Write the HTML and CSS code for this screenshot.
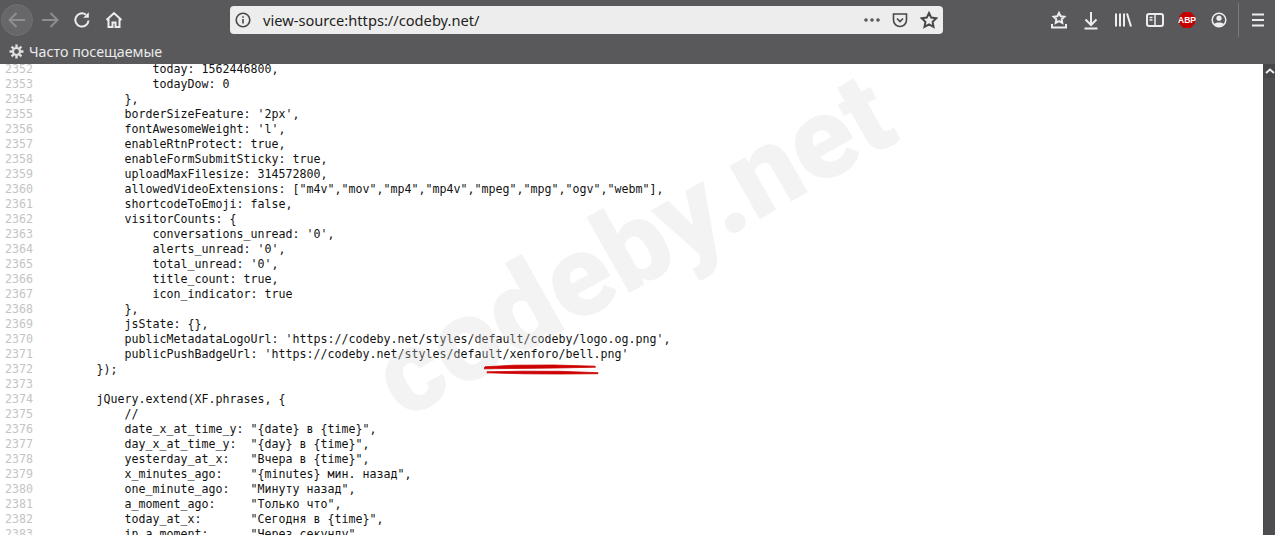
FILE: index.html
```html
<!DOCTYPE html>
<html lang="ru">
<head>
<meta charset="utf-8">
<title>view-source:https://codeby.net/</title>
<link rel="stylesheet" href="styles.css">
</head>
<body>
<header class="chrome">
  <div class="toolbar">
    <button class="btn back"><span class="back-circle"><svg width="20" height="18" viewBox="0 0 20 18"><path d="M18 9H2.500M9.500 2L2.500 9l7 7" class="ic dim"/></svg></span></button>
    <button class="btn"><svg width="20" height="18" viewBox="0 0 20 18"><path d="M2 9h15.500M10.500 2l7 7-7 7" class="ic dim"/></svg></button>
    <button class="btn"><svg width="18" height="18" viewBox="0 0 18 18"><path d="M15.500 9.500A6.600 6.600 0 1 1 13 3.800" class="ic"/><path d="M15.800 1.200v5.600h-5.600z" class="fill"/></svg></button>
    <button class="btn"><svg width="18" height="18" viewBox="0 0 18 18"><path d="M1.500 9L9 2l7.500 7M3.500 8v8h4v-4.500h3V16h4V8" class="ic"/></svg></button>
    <div class="urlbar">
      <svg class="info" width="16" height="16" viewBox="0 0 16 16"><circle cx="8" cy="8" r="6.800" class="dk"/><path d="M8 7v4.500M8 4.200v1.600" class="dk"/></svg>
      <span class="url">view-source:https://codeby.net/</span>
      <svg class="dots" width="18" height="6" viewBox="0 0 18 6"><circle cx="3" cy="3" r="1.800"/><circle cx="9" cy="3" r="1.800"/><circle cx="15" cy="3" r="1.800"/></svg>
      <svg class="pocket" width="16" height="16" viewBox="0 0 16 16"><path d="M1.500 2h13v6a6.500 6.500 0 0 1-13 0z" class="dk"/><path d="M5 6.500L8 9.500l3-3" class="dk"/></svg>
      <svg class="star" width="18" height="18" viewBox="0 0 18 18"><path d="M9 2l2.200 4.600 5 .7-3.600 3.500.9 5L9 13.400 4.500 15.800l.9-5L1.800 7.300l5-.7z" class="dk bold"/></svg>
    </div>
    <div class="tools">
      <button class="btn"><svg width="18" height="20" viewBox="0 0 18 20"><path d="M9 3l1.700 3.300 3.600.5-2.600 2.500.6 3.600L9 11.200l-3.300 1.700.6-3.600-2.600-2.500 3.600-.5z" class="ic"/><path d="M2 14v3.500h14V14" class="ic"/></svg></button>
      <button class="btn"><svg width="18" height="20" viewBox="0 0 18 20"><path d="M9 2v13M3.500 9.500L9 15l5.500-5.500M2.500 18.500h13" class="ic"/></svg></button>
      <button class="btn"><svg width="18" height="18" viewBox="0 0 18 18"><path d="M2 2.500v13M6 2.500v13M10 2.500v13M13 2.500l4 13" class="ic"/></svg></button>
      <button class="btn"><svg width="18" height="16" viewBox="0 0 18 16"><rect x="1" y="2" width="16" height="12" rx="2" class="ic"/><path d="M9 2v12M3.500 5.500h3M3.500 8h3" class="ic thin"/></svg></button>
      <button class="btn"><svg width="18" height="18" viewBox="0 0 18 18"><path d="M5.500 1h7L17 5.500v7L12.500 17h-7L1 12.500v-7z" fill="#c60000"/><text x="9" y="12.200" class="abp">ABP</text></svg></button>
      <button class="btn"><svg width="18" height="18" viewBox="0 0 18 18"><circle cx="9" cy="9" r="6.800" class="ic thin"/><circle cx="9" cy="7.200" r="2.600" class="fill"/><path d="M4 13.500c1-2.600 9-2.600 10 0-2.500 2.400-7.500 2.400-10 0z" class="fill"/></svg></button>
      <span class="sep"></span>
      <button class="btn menu"><svg width="14" height="14" viewBox="0 0 14 14"><path d="M1 1.500h12M1 7h12M1 12.500h12" class="ic wide"/></svg></button>
    </div>
  </div>
  <div class="bookmarks">
    <svg width="15" height="15" viewBox="0 0 14 14"><circle cx="7" cy="7" r="3.300" class="gear"/><path d="M7 .5v2.500M7 11v2.500M.5 7H3M11 7h2.500M2.400 2.400l1.800 1.800M9.800 9.800l1.800 1.800M2.400 11.600l1.800-1.800M9.800 4.200l1.800-1.800" class="gear teeth"/></svg>
    <span>Часто посещаемые</span>
  </div>
</header>
<main class="view">
  <div class="source">
    <div class="lines">
<div class="line"><span class="ln">2352</span><span class="code">                today: 1562446800,</span></div>
<div class="line"><span class="ln">2353</span><span class="code">                todayDow: 0</span></div>
<div class="line"><span class="ln">2354</span><span class="code">            },</span></div>
<div class="line"><span class="ln">2355</span><span class="code">            borderSizeFeature: '2px',</span></div>
<div class="line"><span class="ln">2356</span><span class="code">            fontAwesomeWeight: 'l',</span></div>
<div class="line"><span class="ln">2357</span><span class="code">            enableRtnProtect: true,</span></div>
<div class="line"><span class="ln">2358</span><span class="code">            enableFormSubmitSticky: true,</span></div>
<div class="line"><span class="ln">2359</span><span class="code">            uploadMaxFilesize: 314572800,</span></div>
<div class="line"><span class="ln">2360</span><span class="code">            allowedVideoExtensions: ["m4v","mov","mp4","mp4v","mpeg","mpg","ogv","webm"],</span></div>
<div class="line"><span class="ln">2361</span><span class="code">            shortcodeToEmoji: false,</span></div>
<div class="line"><span class="ln">2362</span><span class="code">            visitorCounts: {</span></div>
<div class="line"><span class="ln">2363</span><span class="code">                conversations_unread: '0',</span></div>
<div class="line"><span class="ln">2364</span><span class="code">                alerts_unread: '0',</span></div>
<div class="line"><span class="ln">2365</span><span class="code">                total_unread: '0',</span></div>
<div class="line"><span class="ln">2366</span><span class="code">                title_count: true,</span></div>
<div class="line"><span class="ln">2367</span><span class="code">                icon_indicator: true</span></div>
<div class="line"><span class="ln">2368</span><span class="code">            },</span></div>
<div class="line"><span class="ln">2369</span><span class="code">            jsState: {},</span></div>
<div class="line"><span class="ln">2370</span><span class="code">            publicMetadataLogoUrl: 'https://codeby.net/styles/default/codeby/logo.og.png',</span></div>
<div class="line"><span class="ln">2371</span><span class="code">            publicPushBadgeUrl: 'https://codeby.net/styles/default/xenforo/bell.png'</span></div>
<div class="line"><span class="ln">2372</span><span class="code">        });</span></div>
<div class="line"><span class="ln">2373</span><span class="code"></span></div>
<div class="line"><span class="ln">2374</span><span class="code">        jQuery.extend(XF.phrases, {</span></div>
<div class="line"><span class="ln">2375</span><span class="code">            //</span></div>
<div class="line"><span class="ln">2376</span><span class="code">            date_x_at_time_y: "{date} в {time}",</span></div>
<div class="line"><span class="ln">2377</span><span class="code">            day_x_at_time_y:  "{day} в {time}",</span></div>
<div class="line"><span class="ln">2378</span><span class="code">            yesterday_at_x:   "Вчера в {time}",</span></div>
<div class="line"><span class="ln">2379</span><span class="code">            x_minutes_ago:    "{minutes} мин. назад",</span></div>
<div class="line"><span class="ln">2380</span><span class="code">            one_minute_ago:   "Минуту назад",</span></div>
<div class="line"><span class="ln">2381</span><span class="code">            a_moment_ago:     "Только что",</span></div>
<div class="line"><span class="ln">2382</span><span class="code">            today_at_x:       "Сегодня в {time}",</span></div>
<div class="line"><span class="ln">2383</span><span class="code">            in_a_moment:      "Через секунду",</span></div>
    </div>
    <div class="watermark">codeby.net</div>
    <svg class="marks" width="120" height="14" viewBox="0 0 120 14"><path d="M1 2.800L30 1.200l40-.2 41 1.200.5 1-40 .8-35 .4-37 .4z" class="mark"/><path d="M3 7.800l35-.6 38 .1 38 1.400v1l-40 .3-34-.2-37-1z" class="mark"/></svg>
  </div>
  <div class="scrollbar">
    <div class="scroll-up"><svg width="10" height="6" viewBox="0 0 10 6"><path d="M1 5l4-3.500L9 5" class="ic"/></svg></div>
  </div>
</main>
</body>
</html>
```
FILE: styles.css
```css
* { box-sizing: border-box; }
html, body { margin: 0; height: 100%; overflow: hidden; }
body { display: flex; flex-direction: column; background: #fff; width: 1275px; height: 535px; }

.chrome { background: #59595b; flex: none; height: 64px; font-family: "Noto Sans", sans-serif; }
.toolbar { height: 40px; display: flex; align-items: center; padding-left: 1px; }
.btn { width: 32px; height: 32px; padding: 0; border: 0; background: none; display: flex; align-items: center; justify-content: center; flex: none; }
.back { margin-right: 1px; }
.back-circle { width: 32px; height: 32px; border-radius: 50%; background: #67676a; border: 1px solid #6f6f72; display: flex; align-items: center; justify-content: center; }

.ic { fill: none; stroke: #ededee; stroke-width: 2; }
.ic.dim { stroke: #8e8e90; }
.ic.thin { stroke-width: 1.500; }
.ic.wide { stroke-width: 2; }
.fill { fill: #ededee; }
.dk { fill: none; stroke: #48484a; stroke-width: 1.600; }
.dk.bold { stroke-width: 2; }
.gear { fill: none; stroke: #e2e2e3; stroke-width: 2; }
.teeth { stroke-width: 2.200; }
.abp { font: bold 8.500px "Liberation Sans", sans-serif; fill: #fff; text-anchor: middle; }

.urlbar { margin-left: 100px; width: 713px; height: 28px; background: #ededed; border-radius: 4px; display: flex; align-items: center; padding-left: 5px; }
.info { flex: none; }
.url { margin-left: 12px; font-size: 14.650px; color: #1f1f21; flex: 1; white-space: nowrap; }
.dots { fill: #59595b; margin-right: 11px; }
.pocket { margin-right: 12px; }
.star { margin-right: 5px; }

.tools { margin-left: 100px; display: flex; align-items: center; }
.sep { width: 1px; height: 34px; background: #7b7b7d; margin: 0 3px 0 3px; }
.menu { width: 32px; }

.bookmarks { height: 24px; display: flex; align-items: center; gap: 5px; padding-left: 9px; padding-bottom: 2px; color: #eaeaea; font-size: 14.250px; }

.view { flex: 1; min-height: 0; display: flex; overflow: hidden; }
.source { flex: 1; position: relative; overflow: hidden; font-family: "DejaVu Sans Mono", monospace; font-size: 11.630px; line-height: 15px; color: #111; }
.lines { margin-top: -2.500px; }
.line { display: flex; height: 15px; white-space: pre; }
.ln { width: 40.500px; padding-left: 5px; color: #c4c4c4; flex: none; }

.watermark { position: absolute; left: 633px; top: 181px; transform: translate(-50%, -50%) rotate(-29.500deg); font: 900 116px/1 Roboto, sans-serif; color: rgba(215, 215, 215, .3); white-space: nowrap; }
.marks { position: absolute; left: 484px; top: 300px; }
.mark { fill: #cc0000; stroke: #cc0000; stroke-width: .8; }

.scrollbar { width: 12px; flex: none; background: #4e4e50; border-left: 1px solid #464648; }
.scroll-up { height: 14px; background: #47474a; display: flex; align-items: center; justify-content: center; }
```
